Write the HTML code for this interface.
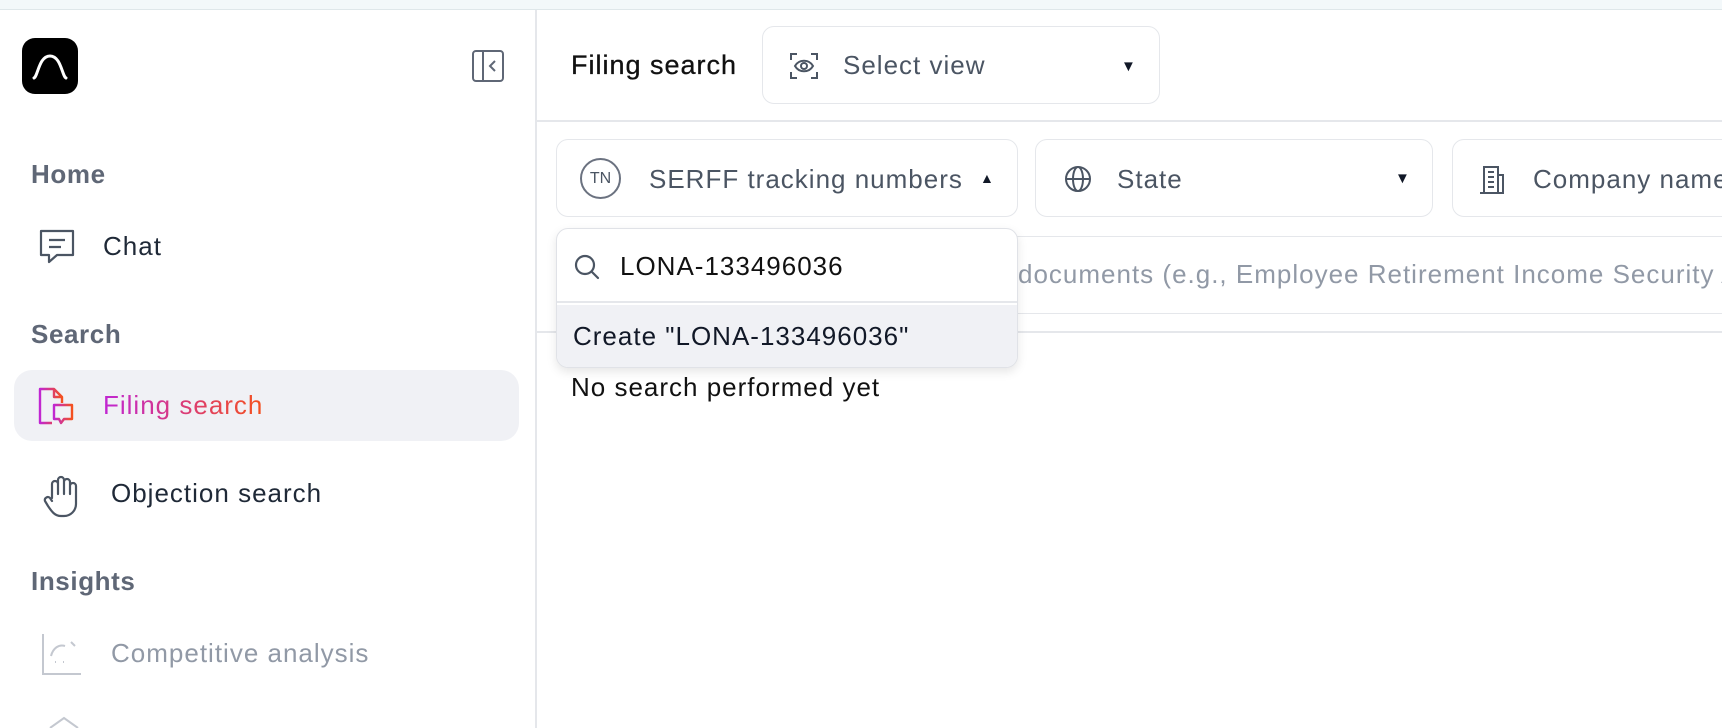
<!DOCTYPE html>
<html><head><meta charset="utf-8"><style>
*{box-sizing:border-box;margin:0;padding:0}
body{width:1722px;height:728px;overflow:hidden;background:#fff;font-family:"Liberation Sans",sans-serif;color:#111827;position:relative}
.a{position:absolute;white-space:nowrap}
.top{left:0;top:0;width:1722px;height:10px;background:#f3f8fa;border-bottom:1px solid #dfe7ea}
.side{left:0;top:10px;width:537px;height:718px;border-right:2px solid #e5e7eb}
.h{font-size:26px;font-weight:bold;color:#5f6776;letter-spacing:.6px}
.it{font-size:26px;color:#1f2937;letter-spacing:1px}
.box{border:1.5px solid #e5e7eb;border-radius:12px;background:#fff}
.t{font-size:26px;color:#4b5563;letter-spacing:1px}
svg{position:absolute}
</style></head><body>
<div class="a top"></div>
<div class="a side"></div>
<div class="a" style="left:22px;top:38px;width:56px;height:56px;background:#000;border-radius:13px"></div>
<svg style="left:22px;top:38px" width="56" height="56" viewBox="0 0 56 56"><path d="M12 40 C16 38 17 18 28 18 C39 18 40 38 44 40" fill="none" stroke="#fff" stroke-width="3" stroke-linecap="round"/></svg>
<svg style="left:471px;top:49px" width="34" height="34" viewBox="0 0 34 34"><rect x="2" y="2" width="30" height="30" rx="3" fill="none" stroke="#5f6776" stroke-width="2"/><path d="M12 2V32M24 12l-5 5 5 5" fill="none" stroke="#5f6776" stroke-width="2"/></svg>
<div class="a h" style="left:31px;top:159px">Home</div>
<svg style="left:37px;top:227px" width="42" height="40" viewBox="0 0 42 40"><path d="M4 4h32v24H20l-8 7v-7H4z" fill="none" stroke="#4b5563" stroke-width="2.2" stroke-linejoin="round"/><path d="M12 13h16M12 20h12" stroke="#4b5563" stroke-width="2.2"/></svg>
<div class="a it" style="left:103px;top:231px">Chat</div>
<div class="a h" style="left:31px;top:319px">Search</div>
<div class="a" style="left:14px;top:370px;width:505px;height:71px;background:#f0f1f5;border-radius:18px"></div>
<svg style="left:36px;top:385px" width="42" height="44" viewBox="0 0 42 44"><defs><linearGradient id="g" x1="0" x2="1"><stop offset="0" stop-color="#c026d3"/><stop offset="1" stop-color="#f4511e"/></linearGradient></defs><path d="M16 38H4V4h14l8 8v6M18 4v8h8" fill="none" stroke="url(#g)" stroke-width="2.4" stroke-linejoin="round"/><path d="M18 20h18v14h-8l-3 4-2-4h-5z" fill="none" stroke="url(#g)" stroke-width="2.4" stroke-linejoin="round"/></svg>
<div class="a" style="left:103px;top:390px;font-size:26px;letter-spacing:1px;background:linear-gradient(90deg,#c026d3,#f4511e);-webkit-background-clip:text;color:transparent">Filing search</div>
<svg style="left:40px;top:474px" width="44" height="44" viewBox="0 0 44 44"><path d="M12 24V10a3 3 0 0 1 6 0v10V6a3 3 0 0 1 6 0v14V8a3 3 0 0 1 6 0v12-8a3 3 0 0 1 6 0v18a12 12 0 0 1-12 12h-3c-6 0-9-4-13-10l-3-5a3 3 0 0 1 5-3l2 3" fill="none" stroke="#4b5563" stroke-width="2.2" stroke-linecap="round" stroke-linejoin="round"/></svg>
<div class="a it" style="left:111px;top:478px">Objection search</div>
<div class="a h" style="left:31px;top:566px">Insights</div>
<svg style="left:41px;top:632px" width="44" height="44" viewBox="0 0 44 44"><path d="M2 2v40h38" fill="none" stroke="#c4c8d0" stroke-width="2"/><path d="M10 24c2-8 8-12 14-10M30 10l4 4M14 30h1M22 30h1" fill="none" stroke="#c4c8d0" stroke-width="2"/></svg>
<div class="a" style="left:111px;top:638px;font-size:26px;letter-spacing:1px;color:#9199a6">Competitive analysis</div>
<svg style="left:46px;top:716px" width="36" height="12" viewBox="0 0 36 12"><path d="M4 12L18 2l14 10" fill="none" stroke="#c4c8d0" stroke-width="2"/></svg>

<div class="a" style="left:571px;top:50px;font-size:27px;letter-spacing:1px;color:#111;-webkit-text-stroke:.3px #111">Filing search</div>
<div class="a box" style="left:762px;top:26px;width:398px;height:78px"></div>
<svg style="left:789px;top:52px" width="30" height="28" viewBox="0 0 30 28"><path d="M2 8V2h6M22 2h6v6M28 20v6h-6M8 26H2v-6" fill="none" stroke="#4b5563" stroke-width="2"/><path d="M6 14c4-7 14-7 18 0c-4 7-14 7-18 0z" fill="none" stroke="#4b5563" stroke-width="2"/><circle cx="15" cy="14" r="3" fill="none" stroke="#4b5563" stroke-width="2"/></svg>
<div class="a t" style="left:843px;top:50px">Select view</div>
<div class="a" style="left:1121px;top:58px;font-size:15px">▼</div>
<div class="a" style="left:537px;top:120px;width:1185px;height:2px;background:#e5e7eb"></div>

<div class="a box" style="left:556px;top:139px;width:462px;height:78px"></div>
<div class="a" style="left:580px;top:158px;width:41px;height:41px;border:2px solid #6b7280;border-radius:50%;font-size:16px;color:#4b5563;text-align:center;line-height:37px">TN</div>
<div class="a t" style="left:649px;top:164px">SERFF tracking numbers</div>
<div class="a" style="left:980px;top:170px;font-size:14px">▲</div>
<div class="a box" style="left:1035px;top:139px;width:398px;height:78px"></div>
<svg style="left:1063px;top:164px" width="30" height="30" viewBox="0 0 30 30"><circle cx="15" cy="15" r="12" fill="none" stroke="#4b5563" stroke-width="2"/><ellipse cx="15" cy="15" rx="5" ry="12" fill="none" stroke="#4b5563" stroke-width="2"/><path d="M3 15h24" stroke="#4b5563" stroke-width="2"/></svg>
<div class="a t" style="left:1117px;top:164px">State</div>
<div class="a" style="left:1395px;top:170px;font-size:15px">▼</div>
<div class="a box" style="left:1452px;top:139px;width:300px;height:78px"></div>
<svg style="left:1478px;top:163px" width="28" height="32" viewBox="0 0 28 32"><path d="M6 30V4h14v26M2 30h24M20 12h5v18M10 9h6M10 14h6M10 19h6M10 24h6" fill="none" stroke="#4b5563" stroke-width="2"/></svg>
<div class="a t" style="left:1533px;top:164px">Company name</div>
<div class="a box" style="left:556px;top:236px;width:1200px;height:78px"></div>
<div class="a" style="left:1018px;top:259px;font-size:26px;letter-spacing:1px;color:#9199a6">documents (e.g., Employee Retirement Income Security Act)</div>
<div class="a" style="left:537px;top:331px;width:1185px;height:2px;background:#e5e7eb"></div>
<div class="a" style="left:571px;top:372px;font-size:26px;letter-spacing:1px;color:#111">No search performed yet</div>

<div class="a" style="left:556px;top:228px;width:462px;height:140px;background:#fff;border:1.5px solid #e0e2e7;border-radius:12px;box-shadow:0 4px 10px rgba(0,0,0,.1);overflow:hidden">
<div style="position:absolute;left:0;top:72px;width:100%;height:2px;background:#e5e7eb"></div>
<div style="position:absolute;left:0;top:76px;width:100%;height:64px;background:#f0f1f5"></div>
</div>
<svg style="left:572px;top:252px" width="30" height="30" viewBox="0 0 30 30"><circle cx="13" cy="13" r="9" fill="none" stroke="#4b5563" stroke-width="2.2"/><path d="M20 20l6 6" stroke="#4b5563" stroke-width="2.2" stroke-linecap="round"/></svg>
<div class="a" style="left:620px;top:251px;font-size:26px;letter-spacing:1px;color:#111">LONA-133496036</div>
<div class="a" style="left:573px;top:321px;font-size:26px;letter-spacing:1px;color:#111827">Create "LONA-133496036"</div>
</body></html>
